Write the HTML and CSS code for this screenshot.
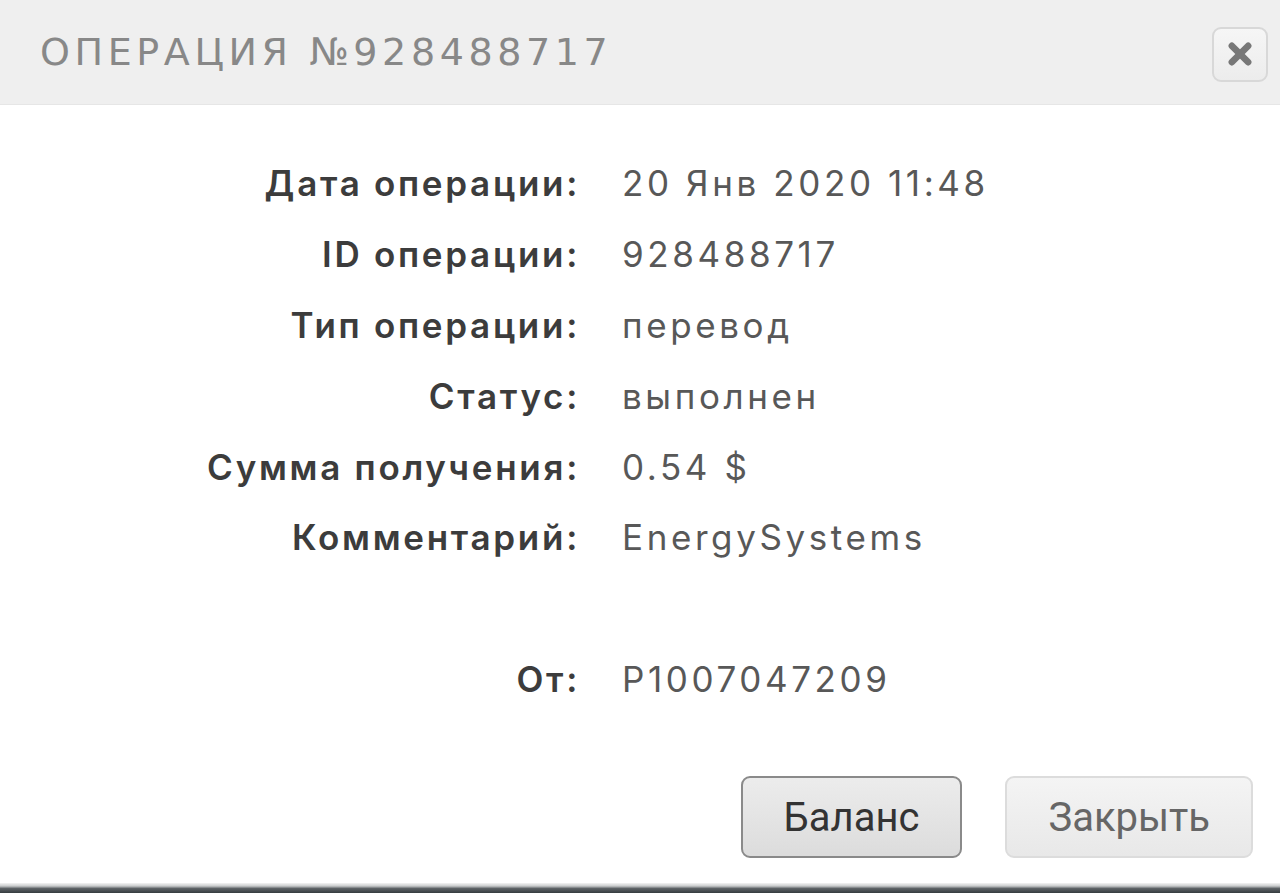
FILE: index.html
```html
<!DOCTYPE html>
<html lang="ru">
<head>
<meta charset="utf-8">
<title>Операция №928488717</title>
<link rel="stylesheet" href="styles.css">
</head>
<body>
<div class="modal">
  <div class="header">
    <h1 class="title">ОПЕРАЦИЯ №928488717</h1>
    <button class="close" type="button" aria-label="Закрыть">
      <svg viewBox="0 0 24 24" width="28" height="28"><path d="M5 5 L19 19 M19 5 L5 19" stroke="#777" stroke-width="5.6" stroke-linecap="round"/></svg>
    </button>
  </div>
  <div class="content">
    <dl class="details">
      <dt>Дата операции:</dt><dd>20 Янв 2020 11:48</dd>
      <dt>ID операции:</dt><dd>928488717</dd>
      <dt>Тип операции:</dt><dd>перевод</dd>
      <dt>Статус:</dt><dd>выполнен</dd>
      <dt>Сумма получения:</dt><dd>0.54 $</dd>
      <dt>Комментарий:</dt><dd>EnergySystems</dd>
      <dt class="blank"></dt><dd class="blank"></dd>
      <dt>От:</dt><dd>P1007047209</dd>
    </dl>
    <div class="actions">
      <button class="btn btn-primary" type="button">Баланс</button>
      <button class="btn" type="button">Закрыть</button>
    </div>
  </div>
  <div class="bottom-bar"></div>
</div>
</body>
</html>
```

FILE: styles.css
```css
html, body {
  margin: 0;
  padding: 0;
  background: #ffffff;
}
body {
  width: 1280px;
  height: 893px;
  overflow: hidden;
  font-family: Inter, "Open Sans", "DejaVu Sans", sans-serif;
}
.modal {
  display: flex;
  flex-direction: column;
  height: 893px;
}
.header {
  height: 105px;
  box-sizing: border-box;
  background: #efefef;
  border-bottom: 1px solid #e6e6e6;
  display: flex;
  align-items: center;
  justify-content: space-between;
  padding: 0 12px 0 40px;
}
.title {
  margin: 0;
  font-family: "DejaVu Sans", sans-serif;
  font-weight: 400;
  font-size: 38px;
  letter-spacing: 4.6px;
  color: #888888;
}
.close {
  width: 56px;
  height: 55px;
  box-sizing: border-box;
  border: 2px solid #d8d8d8;
  border-radius: 9px;
  background: linear-gradient(#f6f6f6, #ececec);
  display: flex;
  align-items: center;
  justify-content: center;
  padding: 0;
  margin-top: 4px;
}
.close svg {
  filter: blur(0.6px);
}
.content {
  flex: 1;
  display: flex;
  flex-direction: column;
}
.details {
  margin: 43px 0 0 0;
  display: grid;
  grid-template-columns: 580px 1fr;
  column-gap: 42px;
  grid-auto-rows: 70.8px;
  align-items: center;
}
.details dt {
  text-align: right;
  font-size: 35px;
  font-weight: 600;
  color: #3c3c3c;
  letter-spacing: 2.7px;
}
.details dd {
  margin: 0;
  font-size: 35px;
  font-weight: 400;
  color: #585858;
  letter-spacing: 3.6px;
}
.actions {
  display: flex;
  justify-content: flex-end;
  gap: 43px;
  padding: 0 27px 0 0;
  margin-top: 62px;
}
.btn {
  height: 82px;
  box-sizing: border-box;
  padding: 0 41px;
  font-family: Roboto, "Liberation Sans", sans-serif;
  font-size: 40px;
  color: #666;
  border: 2px solid #dcdcdc;
  border-radius: 9px;
  background: linear-gradient(#f4f4f4 0%, #eeeeee 50%, #e8e8e8 100%);
}
.btn-primary {
  color: #333;
  border-color: #8a8a8a;
  background: linear-gradient(#ececec 0%, #e4e4e4 50%, #dcdcdc 100%);
}
.bottom-bar {
  height: 10px;
  background: linear-gradient(#f4f4f4 0%, #c9cbcc 30%, #5d6266 55%, #353b3f 100%);
}
```
